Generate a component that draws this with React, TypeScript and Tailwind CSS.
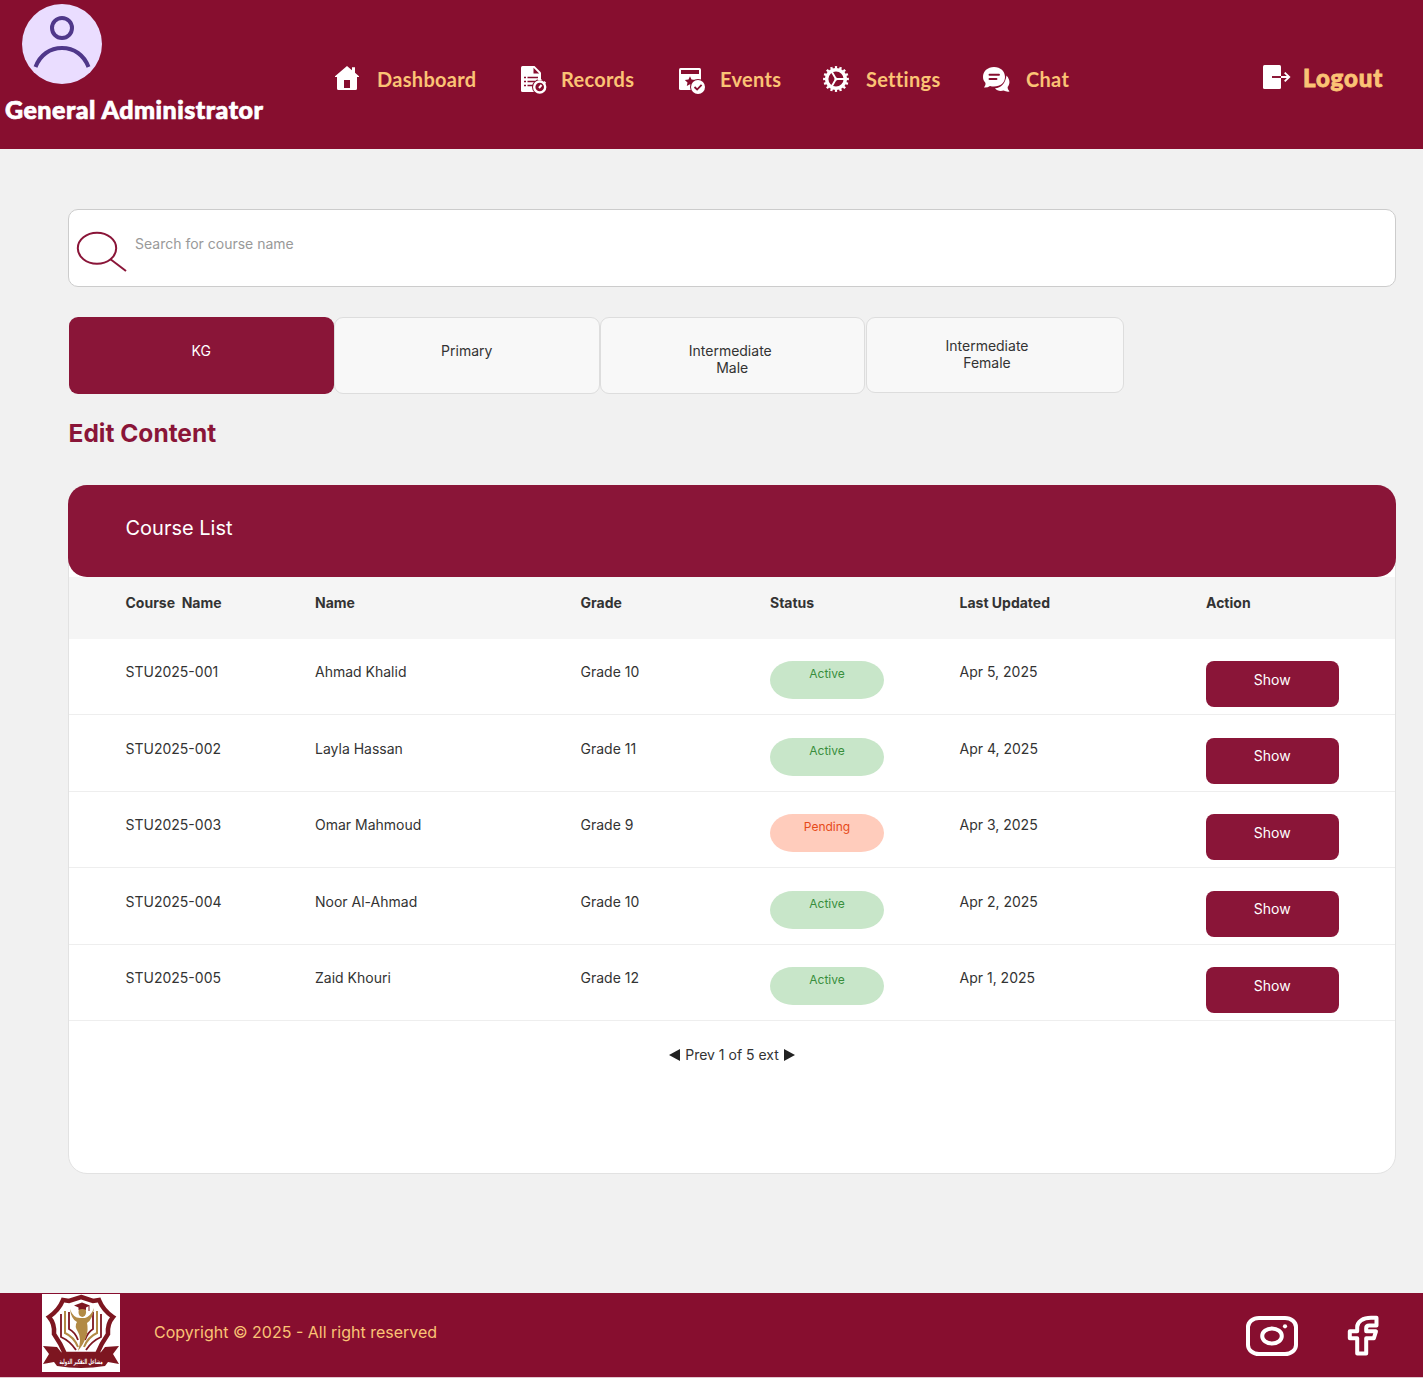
import React from "react";

const HomeIcon = () => (
  <svg width="25" height="25" viewBox="0 0 25 25" fill="#fff">
    <path d="M12 0 L17 4.2 V1.3 H20 V6.8 L24 10.3 V11 H22 V22.5 Q22 24 20.5 24 H3.5 Q2 24 2 22.5 V11 H0 V10.3Z" />
    <path d="M9 14h6v8H9z" fill="#870e2f" />
  </svg>
);

const RecordsIcon = () => (
  <svg width="26" height="29" viewBox="0 0 26 29">
    <path d="M1.500 0H13.500L20 6.500V26H1.500Q0 26 0 24.500V1.500Q0 0 1.500 0Z" fill="#fff" />
    <path d="M12.500 1.800V7.500H18.200Z" fill="#870e2f" />
    <path d="M3 11.500h2M6.500 11.500H17M3 15.500h2M6.500 15.500H14M3 19.500h2M6.500 19.500H12" stroke="#870e2f" strokeWidth="1.500" />
    <circle cx="18.700" cy="21" r="7.700" fill="#870e2f" />
    <path d="M17 13.700h3.500" stroke="#fff" strokeWidth="1.400" />
    <circle cx="18.700" cy="21" r="5.500" fill="#870e2f" stroke="#fff" strokeWidth="2.400" />
    <path d="M18 22L20.500 19" stroke="#fff" strokeWidth="2" />
    <path d="M23 15.500l1.700 1.700" stroke="#fff" strokeWidth="1.400" />
  </svg>
);

const EventsIcon = () => (
  <svg width="27" height="27" viewBox="0 0 27 27">
    <rect width="22" height="22" rx="1.500" fill="#fff" />
    <path d="M2 2h18v4H2z" fill="#870e2f" />
    <path d="M11 8.200l1.500 3.300 3.700.4-2.700 2.500.7 3.600-3.200-1.800L7.800 18l.7-3.600-2.700-2.500 3.700-.4Z" fill="#870e2f" />
    <circle cx="19" cy="19" r="8" fill="#870e2f" />
    <circle cx="19" cy="19" r="7" fill="#fff" />
    <path d="M15.500 19l2.600 2.500 4.500-4.700" fill="none" stroke="#870e2f" strokeWidth="1.800" />
  </svg>
);

const SettingsIcon = () => (
  <svg width="26" height="26" viewBox="0 0 26 26" fill="none" stroke="#fff">
    <circle cx="13" cy="13" r="9.300" strokeWidth="3.400" />
    <circle cx="13" cy="13" r="11.700" strokeWidth="2.400" pathLength="160" strokeDasharray="5 5" strokeDashoffset="2.500" />
    <path d="M13 13H22M13 13L8.500 5.200M13 13L8.500 20.800" strokeWidth="1.900" />
    <circle cx="13" cy="13" r="1.600" fill="#fff" stroke="none" />
  </svg>
);

const ChatIcon = () => (
  <svg width="28" height="26" viewBox="0 0 28 26">
    <path d="M23.500 8.500C28 13.500 26.500 18 24.600 20.100Q24.300 22.500 26.500 24.500Q23.500 25 20.500 23.500C17 24.500 13.800 23.500 12 21.200C18 21 22.500 16.500 23.500 8.500Z" fill="#fff" />
    <path d="M11 0C17.500 0 22 4.300 22 10C22 15.700 17.500 19.500 11 19.500C9.600 19.500 8.300 19.300 7 18.900Q4.500 20.800 1 20.500Q3 18.500 2.500 15.900C.9 14.300 0 12.300 0 10C0 4.300 4.700 0 11 0Z" fill="#fff" />
    <path d="M6.500 7.800H16M6.500 12H13.500" stroke="#870e2f" strokeWidth="1.900" strokeLinecap="round" />
  </svg>
);

const LogoutIcon = () => (
  <svg width="28" height="25" viewBox="0 0 28 25">
    <rect width="18" height="24" rx="1.500" fill="#fff" />
    <path d="M9 12h9" stroke="#870e2f" strokeWidth="1.900" />
    <path d="M18 12h8M21.700 7.600L26.200 12l-4.500 4.400" stroke="#fff" strokeWidth="1.900" fill="none" />
  </svg>
);

const SchoolLogo = () => (
  <svg width="78" height="78" viewBox="0 0 78 78" className="block bg-white">
    <path d="M39 3L51 7L57 6Q61 16 71 23Q65 30 66 40Q59 50 55 60H23Q19 50 12 40Q13 30 7 23Q17 16 21 6L27 7Z" fill="#fff" stroke="#7d1620" strokeWidth="4.500" />
    <path d="M34 56Q28 47 19 43V20M44 56Q50 47 59 43V20" fill="none" stroke="#7d1620" strokeWidth="1.800" />
    <path d="M36 53Q32 43 23 39V17M42 53Q46 43 55 39V17" fill="none" stroke="#b28a45" strokeWidth="2" />
    <path d="M36 46Q33 38 27 35V18M43 46Q46 38 51 35V18" fill="none" stroke="#7d1620" strokeWidth="1.800" />
    <ellipse cx="40.300" cy="18" rx="3.800" ry="5" fill="#b28a45" />
    <path d="M28 15Q31 24 38 24H43Q49 22 52 14Q51 25 45 29Q48 42 36 57Q40 44 36 38Q32 32 35 28Q29 25 28 15Z" fill="#b28a45" />
    <path d="M32 11.500L40 8.500L48 11.500L44 13.500V16Q40 14 36.500 16V13.500Z" fill="#7d1620" />
    <path d="M47 12v5" stroke="#7d1620" />
    <path d="M1 52L15 53L19 58Q39 66 59 58L63 53L77 52L71 60L77 70L66 68L63 72Q39 76 15 72L12 68L1 70L7 60Z" fill="#7d1620" />
    <text transform="translate(39 69.500) scale(0.56 1)" textAnchor="middle" fill="#fff" fontSize="7" fontWeight="700" fontFamily="'DejaVu Sans', sans-serif">مشاعل التفكير الدولية</text>
  </svg>
);

const nav = [
  { label: "Dashboard", icon: <HomeIcon />, box: "w-[42px] pt-[1px]" },
  { label: "Records", icon: <RecordsIcon />, box: "w-[40px] pt-[1px]" },
  { label: "Events", icon: <EventsIcon />, box: "w-[41px] pt-[3px]" },
  { label: "Settings", icon: <SettingsIcon />, box: "w-[43px] pt-[1px]" },
  { label: "Chat", icon: <ChatIcon />, box: "w-[43px] pt-[2px]" },
];

const rows = [
  ["STU2025-001", "Ahmad Khalid", "Grade 10", "Active", "Apr 5, 2025"],
  ["STU2025-002", "Layla Hassan", "Grade 11", "Active", "Apr 4, 2025"],
  ["STU2025-003", "Omar Mahmoud", "Grade 9", "Pending", "Apr 3, 2025"],
  ["STU2025-004", "Noor Al-Ahmad", "Grade 10", "Active", "Apr 2, 2025"],
  ["STU2025-005", "Zaid Khouri", "Grade 12", "Active", "Apr 1, 2025"],
];

const columns = "grid grid-cols-[189.5px_265.5px_189.5px_189.5px_246.5px_132.5px] pl-[56.5px]";

export default function App() {
  return (
    <div className="flex h-[1378px] w-[1423px] flex-col overflow-hidden bg-[#f1f1f1] font-['Inter',sans-serif] text-[14px] text-[#333]">
      <header className="flex h-[149px] shrink-0 bg-[#870e2f] font-['Lato',sans-serif]">
        <div className="w-[335px] pt-1">
          <svg className="ml-[22px] block" width="80" height="80" viewBox="0 0 80 80" fill="none" stroke="#4f378a" strokeWidth="4">
            <circle cx="40" cy="40" r="40" fill="#eaddff" stroke="none" />
            <circle cx="40" cy="24" r="10" />
            <path d="M13.500 63C18 51 28 44 40 44S62 51 66.500 63" />
          </svg>
          <div className="mt-[9px] ml-[5px] text-[25px] leading-8 font-black tracking-[0.5px] whitespace-nowrap text-white [-webkit-text-stroke:0.7px_#fff]">
            General Administrator
          </div>
        </div>
        <nav className="grid w-[928px] grid-cols-[186px_158px_144px_160px_280px] pt-[65px]">
          {nav.map((n) => (
            <a key={n.label} className="flex h-8 items-start">
              <span className={n.box}>{n.icon}</span>
              <span className="text-[20px] leading-7 font-bold tracking-[0.3px] text-[#fbc375]">{n.label}</span>
            </a>
          ))}
        </nav>
        <a className="flex items-start pt-[65px]">
          <span className="w-[40px]"><LogoutIcon /></span>
          <span className="-mt-[3px] text-[24px] leading-8 font-black tracking-[0.9px] text-[#fbc375] [-webkit-text-stroke:0.8px_#fbc375]">Logout</span>
        </a>
      </header>

      <main className="flex h-[1144px] shrink-0 flex-col pt-[60px] pl-[68px]">
        <div className="flex h-[78px] w-[1328px] rounded-[10px] border border-[#ccc] bg-white">
          <svg className="mt-[21px] ml-[7px]" width="52" height="42" viewBox="0 0 52 42" fill="none" stroke="#8a1538" strokeWidth="2">
            <ellipse cx="21" cy="17.300" rx="19.200" ry="15.500" />
            <path d="M34.500 28.300L50 40" />
          </svg>
          <span className="mt-[24px] ml-[7px] leading-5 text-[#999]">Search for course name</span>
        </div>

        <div className="mt-[30px] ml-[0.5px] flex h-[77px] text-center leading-[17px]">
          <div className="w-[265.5px] rounded-[9px] bg-[#8a1538] pt-[25px] text-white">KG</div>
          <div className="w-[265.5px] rounded-[9px] border border-[#ddd] bg-[#f8f8f8] pt-[24px]">Primary</div>
          <div className="w-[265.5px] rounded-[9px] border border-[#ddd] bg-[#f8f8f8] pt-[24px]">
            <div className="-ml-1">Intermediate</div>
            <div>Male</div>
          </div>
          <div className="ml-[0.5px] h-[76px] w-[258px] rounded-[9px] border border-[#ddd] bg-[#f8f8f8] pt-[19px]">
            <div className="-ml-[15px]">Intermediate</div>
            <div className="-ml-[15px]">Female</div>
          </div>
        </div>

        <h1 className="mt-[22.5px] ml-[0.5px] h-8 text-[24.5px] leading-8 font-bold text-[#8a1538]">Edit Content</h1>

        <section className="mt-[36.5px] flex h-[689px] w-[1328px] flex-col rounded-[19px] border border-[#e2e2e2] bg-white">
          <div className="-mx-px -mt-px h-[92px] shrink-0 rounded-[19px] bg-[#8a1538] pt-[29px] pl-[57.5px] text-[20px] leading-7 text-white">Course List</div>
          <div className={columns + " h-[61.5px] shrink-0 bg-[#f5f5f5] pt-[16px] leading-5 font-bold"}>
            <span className="whitespace-pre">Course  Name</span>
            <span>Name</span>
            <span>Grade</span>
            <span>Status</span>
            <span>Last Updated</span>
            <span>Action</span>
          </div>
          {rows.map((r) => (
            <div key={r[0]} className={columns + " h-[76.5px] shrink-0 border-b border-[#eee] bg-white pt-[22.5px] leading-5"}>
              <span className="pt-px">{r[0]}</span>
              <span className="pt-px">{r[1]}</span>
              <span className="pt-px">{r[2]}</span>
              <span
                className={
                  "h-[38px] w-[114px] rounded-[23px/19px] pt-[3px] text-center text-[12px] " +
                  (r[3] === "Active" ? "bg-[#c8e6c9] text-[#388e3c]" : "bg-[#ffccbc] text-[#e64a19]")
                }
              >
                {r[3]}
              </span>
              <span className="pt-px">{r[4]}</span>
              <button className="flex h-[46px] w-[132.5px] justify-center rounded-[8px] bg-[#8a1538] pt-[8.5px] text-white">Show</button>
            </div>
          ))}
          <div className="mt-[24px] flex items-center justify-center gap-[5px] leading-5">
            <svg width="11" height="12" viewBox="0 0 11 12" fill="#222"><path d="M11 0V12L0 6Z" /></svg>
            Prev 1 of 5 ext
            <svg width="11" height="12" viewBox="0 0 11 12" fill="#222"><path d="M0 0V12L11 6Z" /></svg>
          </div>
        </section>
      </main>

      <footer className="flex h-[84px] shrink-0 bg-[#870e2f] pt-px pl-[42px]">
        <SchoolLogo />
        <span className="mt-[26px] ml-[34px] w-[1092px] text-[16px] leading-6 text-[#fbc375]">Copyright © 2025 - All right reserved</span>
        <svg className="mt-[21px]" width="52" height="42" viewBox="0 0 52 42" fill="none" stroke="#fff" strokeWidth="4">
          <rect x="2" y="3" width="48" height="36" rx="11" ry="9" />
          <ellipse cx="26" cy="21" rx="9.800" ry="7.500" />
          <circle cx="39" cy="11.300" r="2.100" fill="#fff" stroke="none" />
        </svg>
        <svg className="mt-[21px] ml-[49px]" width="33" height="42" viewBox="0 0 33 42" fill="none" stroke="#fff" strokeWidth="4" strokeLinejoin="round">
          <path d="M29.500 2.800H24C16 2.800 10.200 6.500 10.200 12V16.300H2.800V23.300H10.200V38.500H19.200V23.300H26.800L29 16.300H19.200V13Q19.200 10.500 22.200 10.500H29.500Z" />
        </svg>
      </footer>
      <div className="h-px bg-[#e3c7cf]" />
    </div>
  );
}
